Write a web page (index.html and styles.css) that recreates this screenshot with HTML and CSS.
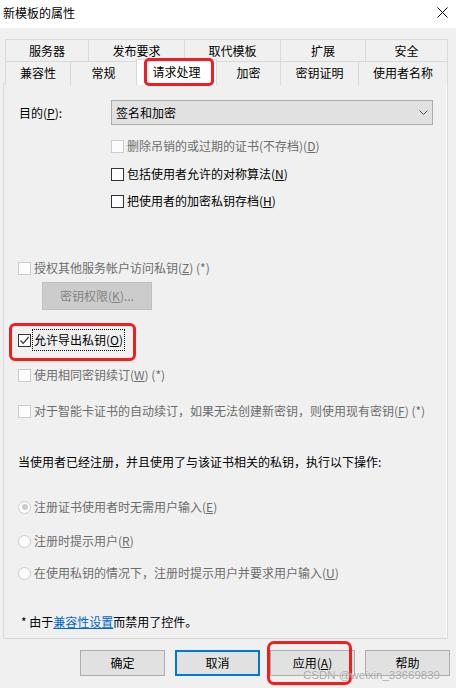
FILE: index.html
```html
<!DOCTYPE html>
<html lang="zh-CN">
<head>
<meta charset="utf-8">
<title>新模板的属性</title>
<link rel="stylesheet" href="styles.css">
</head>
<body>
<div class="window">
  <div class="titlebar">
    <span class="title">新模板的属性</span>
    <span class="close">
      <svg width="11" height="11" viewBox="0 0 11 11"><path d="M0.5 0.5 L10.5 10.5 M10.5 0.5 L0.5 10.5" stroke="#000" stroke-width="1" fill="none"/></svg>
    </span>
  </div>
  <div class="dialog">
    <div class="tabs">
      <div class="tabrow row1">
        <div class="tab">服务器</div>
        <div class="tab">发布要求</div>
        <div class="tab">取代模板</div>
        <div class="tab">扩展</div>
        <div class="tab">安全</div>
      </div>
      <div class="tabrow row2">
        <div class="tab">兼容性</div>
        <div class="tab">常规</div>
        <div class="tab selected">请求处理<span class="mark mark-tab"></span></div>
        <div class="tab">加密</div>
        <div class="tab">密钥证明</div>
        <div class="tab">使用者名称</div>
      </div>
    </div>
    <div class="panel">
      <div class="purpose">
        <span class="plabel">目的(<u>P</u>):</span>
        <div class="combo">
          <span>签名和加密</span>
          <svg class="chev" width="9" height="5" viewBox="0 0 9 5"><path d="M0.5 0.5 L4.5 4.5 L8.5 0.5" stroke="#555" stroke-width="1" fill="none"/></svg>
        </div>
      </div>
      <div class="row indent r1 disabled"><span class="cb"></span><span>删除吊销的或过期的证书(不存档)(<u>D</u>)</span></div>
      <div class="row indent r2"><span class="cb"></span><span>包括使用者允许的对称算法(<u>N</u>)</span></div>
      <div class="row indent r3"><span class="cb"></span><span>把使用者的加密私钥存档(<u>H</u>)</span></div>
      <div class="row r4 disabled"><span class="cb"></span><span>授权其他服务帐户访问私钥(<u>Z</u>) (*)</span></div>
      <div class="btn-disabled">密钥权限(<u>K</u>)...</div>
      <div class="row r5"><span class="cb checked"><svg width="11" height="11" viewBox="0 0 11 11"><path d="M1.5 5.5 L4.2 8.3 L9.6 2" stroke="#333" stroke-width="1.2" fill="none"/></svg></span><span class="focus">允许导出私钥(<u>O</u>)</span><span class="mark mark-export"></span></div>
      <div class="row r6 disabled"><span class="cb"></span><span>使用相同密钥续订(<u>W</u>) (*)</span></div>
      <div class="row r7 disabled"><span class="cb"></span><span>对于智能卡证书的自动续订，如果无法创建新密钥，则使用现有密钥(<u>F</u>) (*)</span></div>
      <div class="row r8"><span>当使用者已经注册，并且使用了与该证书相关的私钥，执行以下操作:</span></div>
      <div class="row r9 disabled"><span class="rb on"></span><span>注册证书使用者时无需用户输入(<u>E</u>)</span></div>
      <div class="row r10 disabled"><span class="rb"></span><span>注册时提示用户(<u>R</u>)</span></div>
      <div class="row r11 disabled"><span class="rb"></span><span>在使用私钥的情况下，注册时提示用户并要求用户输入(<u>U</u>)</span></div>
      <div class="row r12"><span>* 由于<a class="link" href="#">兼容性设置</a>而禁用了控件。</span></div>
    </div>
    <div class="buttons">
      <div class="btn">确定</div>
      <div class="btn default">取消</div>
      <div class="btn apply">应用(<u>A</u>)<span class="mark mark-apply"></span></div>
      <div class="btn">帮助</div>
      <span class="watermark">CSDN @weixin_33669839</span>
    </div>
  </div>
</div>
</body>
</html>
```

FILE: styles.css
```css
html, body {
  margin: 0;
  padding: 0;
}
body {
  width: 456px;
  height: 688px;
  overflow: hidden;
  font-family: "Noto Sans CJK SC", "Noto Sans", sans-serif;
  font-size: 12px;
  color: #000;
  background: #f0f0f0;
}
.window {
  width: 456px;
  height: 688px;
  display: flex;
  flex-direction: column;
}
.titlebar {
  height: 28px;
  background: #fff;
  display: flex;
  align-items: center;
  justify-content: space-between;
  padding: 0 8px 0 3px;
  box-sizing: border-box;
}
.title {
  line-height: 20px;
  margin-top: -3px;
}
.close {
  display: flex;
  margin-top: -3px;
}
.dialog {
  flex: 1;
  background: #f0f0f0;
  padding: 11px 8px 0 3px;
  position: relative;
}
.tabs {
  margin: 0 1px 0 2px;
  position: relative;
  z-index: 2;
}
.tabrow {
  display: grid;
  height: 22px;
}
.row1 {
  grid-template-columns: 83px 96px 96px 85px 82px;
}
.row2 {
  grid-template-columns: 65px 66px 80px 64px 78px 89px;
}
.tab {
  border: 1px solid #d9d9d9;
  border-bottom: none;
  margin-right: -1px;
  text-align: center;
  line-height: 21px;
  background: #f0f0f0;
  position: relative;
  white-space: nowrap;
}
.tab.selected {
  background: #fff;
  margin-top: -2px;
  height: 25px;
  line-height: 23px;
  z-index: 3;
}
.mark {
  position: absolute;
  border: 3px solid #f01e1e;
  border-radius: 6px;
  box-sizing: border-box;
  pointer-events: none;
}
.mark-tab {
  left: 7px;
  top: -2px;
  width: 70px;
  height: 28px;
  border-radius: 5px;
}
.panel {
  border: 1px solid #d9d9d9;
  box-shadow: inset -1px 0 0 #fff, inset 0 1px 0 #fff;
  background: #f0f0f0;
  padding: 0 0 6px 14px;
  height: 556px;
  box-sizing: border-box;
  display: flex;
  flex-direction: column;
}
.purpose {
  display: flex;
  align-items: center;
  margin-top: 16px;
  height: 25px;
}
.plabel {
  width: 93px;
  padding-left: 1px;
  box-sizing: border-box;
}
.combo {
  width: 322px;
  height: 25px;
  box-sizing: border-box;
  background: #e1e1e1;
  border: 1px solid #adadad;
  display: flex;
  align-items: center;
  justify-content: space-between;
  padding: 0 4px 0 4px;
  line-height: 20px;
}
.chev {
  display: block;
}
.row {
  display: flex;
  align-items: center;
  height: 20px;
  line-height: 20px;
  white-space: nowrap;
  position: relative;
}
.indent {
  margin-left: 93px;
}
.r1 { margin-top: 11px; }
.r2 { margin-top: 8px; }
.r3 { margin-top: 7px; }
.r4 { margin-top: 47px; }
.r5 { margin-top: 20px; }
.r6 { margin-top: 15px; }
.r7 { margin-top: 16px; }
.r8 { margin-top: 31px; }
.r9 { margin-top: 25px; }
.r10 { margin-top: 14px; }
.r11 { margin-top: 12px; }
.r12 { margin-top: 29px; padding-left: 3px; }
.disabled {
  color: #6d6d6d;
}
.cb {
  width: 13px;
  height: 13px;
  box-sizing: border-box;
  border: 1px solid #333;
  background: #fff;
  margin-right: 3px;
  flex: none;
  display: flex;
  align-items: center;
  justify-content: center;
}
.disabled .cb {
  border-color: #cccccc;
  background: #fcfcfc;
}
.rb {
  width: 13px;
  height: 13px;
  box-sizing: border-box;
  border: 1px solid #cccccc;
  border-radius: 50%;
  background: #fcfcfc;
  margin-right: 3px;
  flex: none;
  position: relative;
}
.rb.on::after {
  content: "";
  position: absolute;
  left: 2.5px;
  top: 2.5px;
  width: 6px;
  height: 6px;
  border-radius: 50%;
  background: #cccccc;
}
.focus {
  outline: 1px dotted #000;
  outline-offset: 0;
  padding: 0 1px;
  margin-left: -1px;
}
.mark-export {
  left: -9px;
  top: -7px;
  width: 127px;
  height: 38px;
}
.btn-disabled {
  margin-top: 4px;
  margin-left: 24px;
  width: 110px;
  height: 28px;
  box-sizing: border-box;
  background: #cccccc;
  border: 1px solid #bfbfbf;
  color: #838383;
  text-align: center;
  line-height: 25px;
}
.link {
  color: #0066cc;
  text-decoration: underline;
}
.buttons {
  display: flex;
  justify-content: flex-end;
  gap: 10px;
  margin-top: 11px;
  margin-right: -2px;
  position: relative;
}
.btn {
  width: 85px;
  height: 26px;
  box-sizing: border-box;
  background: #e1e1e1;
  border: 1px solid #adadad;
  text-align: center;
  line-height: 23px;
  position: relative;
}
.btn.default {
  border: 2px solid #0078d7;
  line-height: 21px;
}
.mark-apply {
  left: -4px;
  top: -10px;
  width: 85px;
  height: 44px;
  border-radius: 7px;
}
.watermark {
  position: absolute;
  right: 10px;
  top: 18px;
  font-family: "Liberation Sans", Arial, sans-serif;
  font-size: 11.5px;
  line-height: 14px;
  color: rgba(150, 150, 150, 0.85);
  text-shadow: 0 0 1px rgba(255,255,255,0.9);
  pointer-events: none;
}
```
